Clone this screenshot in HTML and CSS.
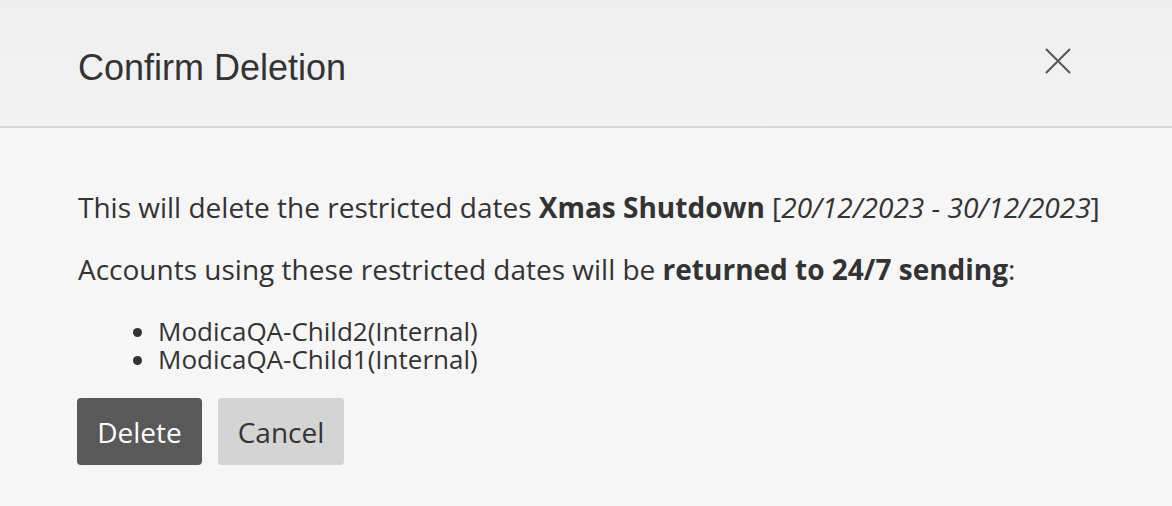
FILE: index.html
```html
<!DOCTYPE html>
<html lang="en">
<head>
    <meta charset="UTF-8">
    <meta name="viewport" content="width=device-width, initial-scale=1.0">
    <title>Confirm Deletion</title>
    <link rel="stylesheet" href="styles.css">
</head>
<body>

    <div class="modal">
        <div class="modal-header">
            <h1>Confirm Deletion</h1>
            <button type="button" class="close-btn" aria-label="Close">
                <svg width="26" height="26" viewBox="0 0 26 26">
                    <path d="M1 1 L25 25 M25 1 L1 25" stroke="#555" stroke-width="2" fill="none"/>
                </svg>
            </button>
        </div>

        <div class="modal-body">
            <p>This will delete the restricted dates <strong>Xmas Shutdown</strong> [<em>20/12/2023 - 30/12/2023</em>]</p>
            <p>Accounts using these restricted dates will be <strong>returned to 24/7 sending</strong>:</p>

            <!-- accounts affected -->
            <ul class="account-list">
                <li>ModicaQA-Child2(Internal)</li>
                <li>ModicaQA-Child1(Internal)</li>
            </ul>

            <div class="actions">
                <button type="button" class="btn btn-delete">Delete</button>
                <button type="button" class="btn btn-cancel">Cancel</button>
            </div>
        </div>
    </div>

</body>
</html>
```

FILE: styles.css
```css
body {
    font-family: 'Open Sans', sans-serif;
    margin: 0;
    padding: 0;
    background: #f6f6f6;
    color: #333333;
}

.modal-header {
    display: flex;
    justify-content: space-between;
    align-items: flex-start;
    height: 128px;
    box-sizing: border-box;
    padding: 47px 101px 0 78px;
    background: linear-gradient(#eeeeee, #f3f3f3);
    border-bottom: 2px solid #d6d6d6;
}

h1 {
    margin: 0;
    font-family: 'Liberation Sans', Arial, sans-serif;
    font-weight: normal;
    font-size: 36px;
    line-height: 41px;
    color: #333333;
}

.close-btn {
    margin-top: 1px;
    padding: 0;
    border: none;
    background: none;
    width: 26px;
    height: 26px;
    cursor: pointer;
}

.close-btn svg {
    display: block;
}

.modal-body {
    padding: 60px 40px 0 78px;
    font-size: 28px;
    line-height: 38px;
}

.modal-body p {
    margin: 0 0 24px;
    white-space: nowrap;
}

.account-list {
    margin: 29px 0 0;
    padding-left: 80px;
    font-size: 26px;
    line-height: 28px;
}

.actions {
    display: flex;
    gap: 16px;
    margin: 25px 0 0 -1px;
}

.btn {
    width: 125px;
    height: 67px;
    padding: 0;
    border: none;
    border-radius: 4px;
    font-family: 'Open Sans', sans-serif;
    font-size: 28px;
    cursor: pointer;
}

.btn-delete {
    background-color: #595959;
    color: #ffffff;
}

.btn-cancel {
    width: 126px;
    background-color: #d4d4d4;
    color: #333333;
}
```
